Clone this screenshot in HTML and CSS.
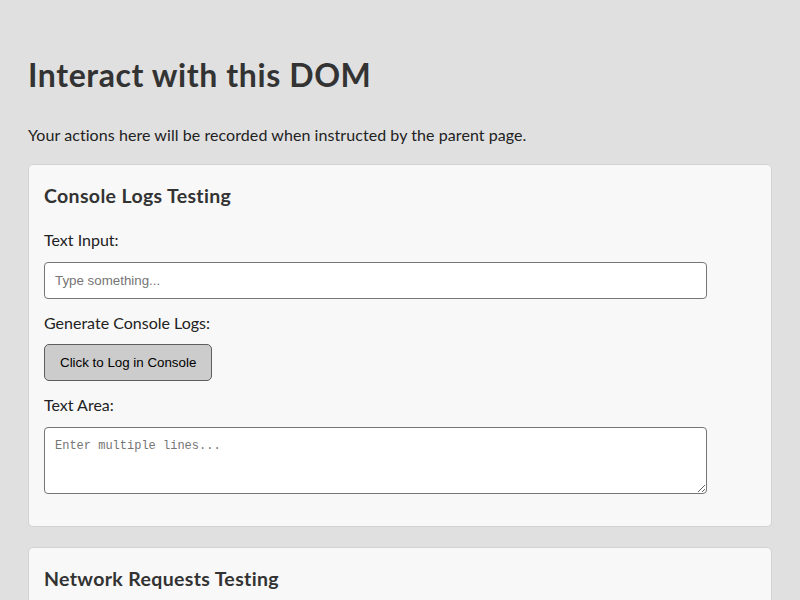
FILE: index.html
```html
<!DOCTYPE html>
<html lang="en">
<head>
<meta charset="utf-8">
<title>Interact with this DOM</title>
<link rel="stylesheet" href="styles.css">
</head>
<body>
<h1 class="title">Interact with this DOM</h1>
<p class="intro">Your actions here will be recorded when instructed by the parent page.</p>

<section class="card">
  <h3 class="card-title">Console Logs Testing</h3>
  <label class="field-label" for="text-input">Text Input:</label>
  <input class="text-input" id="text-input" type="text" placeholder="Type something...">
  <label class="field-label label-tight">Generate Console Logs:</label>
  <button class="btn" type="button">Click to Log in Console</button>
  <label class="field-label" for="text-area">Text Area:</label>
  <textarea class="text-area" id="text-area" placeholder="Enter multiple lines..."></textarea>
</section>

<section class="card">
  <h3 class="card-title">Network Requests Testing</h3>
</section>
</body>
</html>
```
FILE: styles.css
```css
html, body {
  background: #e0e0e0;
}
body {
  margin: 0;
  padding: 56px 28px 28px;
  font-family: "Lato", "Liberation Sans", sans-serif;
  font-size: 16px;
  color: #222;
}
.title {
  margin: 0 0 31px;
  font-size: 32px;
  font-weight: 700;
  letter-spacing: 0.6px;
  color: #333;
  line-height: 38px;
}
.intro {
  margin: 0 0 20px;
  line-height: 19px;
  letter-spacing: 0.07px;
}
.card {
  display: flex;
  flex-direction: column;
  align-items: flex-start;
  background: #f8f8f8;
  border: 1px solid #d2d2d2;
  border-radius: 5px;
  padding: 20px 15px 32px;
  margin-bottom: 20px;
}
.card-title {
  margin: 0 0 23px;
  font-size: 19.5px;
  font-weight: 700;
  letter-spacing: 0.35px;
  line-height: 22px;
  color: #333;
}
.field-label {
  display: block;
  line-height: 19px;
  margin-bottom: 13px;
}
.label-tight {
  margin-bottom: 12px;
}
.text-input {
  box-sizing: border-box;
  width: 663px;
  height: 37px;
  margin: 0 0 14px;
  padding: 0 10px;
  border: 1px solid #767676;
  border-radius: 4px;
  background: #fff;
  font-family: "Liberation Sans", Arial, sans-serif;
  font-size: 13.33px;
  color: #000;
}
.text-input::placeholder {
  color: #757575;
}
.btn {
  box-sizing: border-box;
  height: 37px;
  margin: 0 0 14px;
  padding: 0 15px;
  background: #cccccc;
  border: 1px solid #5e5e5e;
  border-radius: 5px;
  font-family: "Liberation Sans", Arial, sans-serif;
  font-size: 13.33px;
  color: #000;
}
.text-area {
  box-sizing: border-box;
  width: 663px;
  height: 67px;
  margin: 0;
  padding: 11px 10px;
  border: 1px solid #767676;
  border-radius: 4px;
  background: #fff;
  font-family: "Liberation Mono", monospace;
  font-size: 12px;
  color: #000;
}
.text-area::placeholder {
  color: #757575;
}
```
